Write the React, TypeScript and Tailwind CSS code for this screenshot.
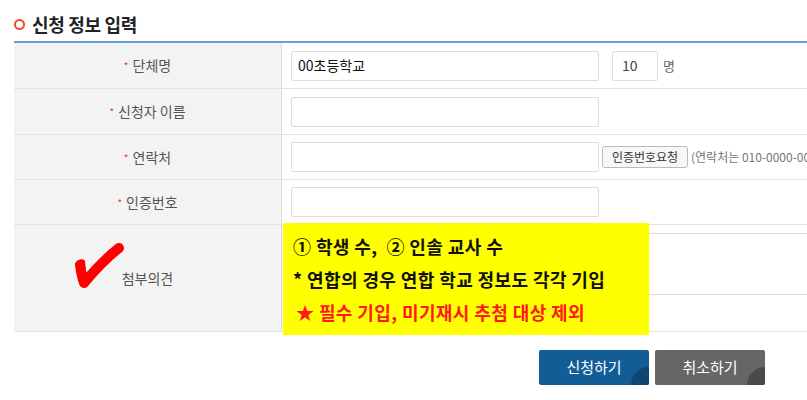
export default function App() {
  const labelCls =
    "w-[268px] shrink-0 bg-[#f3f3f3] border-r border-[#dddddd] flex items-center justify-center text-[14px] text-[#555555]";

  const Star = () => <span className="text-[#e0452a] text-[10px] mr-[4px]">*</span>;

  return (
    <div
      className="w-[807px] h-[400px] overflow-hidden bg-white"
      style={{ fontFamily: '"Noto Sans CJK KR", "Noto Sans", sans-serif' }}
    >
      {/* title */}
      <div className="flex items-center pl-[14px] pt-[7px] h-[41px]">
        <span className="w-[11px] h-[11px] rounded-full border-[2.5px] border-[#ec4e20] mr-[7px]" />
        <h2 className="text-[18px] font-bold text-[#222222] tracking-[-0.3px]">신청 정보 입력</h2>
      </div>

      <div className="ml-[14px] w-[820px] border-t-2 border-[#6d9be0]">
        {/* 단체명 */}
        <div className="flex h-[46px] border-b border-[#e2e2e2]">
          <div className={labelCls}>
            <Star />
            단체명
          </div>
          <div className="flex items-center pl-[9px]">
            <div className="shrink-0 w-[308px] h-[30px] border border-[#dddddd] rounded-[2px] flex items-center px-[6px] text-[14px] text-[#111111]">
              00초등학교
            </div>
            <div className="shrink-0 ml-[13px] w-[46px] h-[30px] border border-[#dddddd] rounded-[2px] flex items-center px-[9px] text-[14px] text-[#444444]">
              10
            </div>
            <span className="ml-[5px] text-[13px] text-[#666666]">명</span>
          </div>
        </div>

        {/* 신청자 이름 */}
        <div className="flex h-[46px] border-b border-[#e2e2e2]">
          <div className={labelCls}>
            <Star />
            신청자 이름
          </div>
          <div className="flex items-center pl-[9px]">
            <div className="shrink-0 w-[308px] h-[30px] border border-[#dddddd] rounded-[2px]" />
          </div>
        </div>

        {/* 연락처 */}
        <div className="flex h-[45px] border-b border-[#e2e2e2]">
          <div className={labelCls}>
            <Star />
            연락처
          </div>
          <div className="flex items-center pl-[9px] min-w-0">
            <div className="shrink-0 w-[308px] h-[30px] border border-[#dddddd] rounded-[2px]" />
            <button className="shrink-0 whitespace-nowrap ml-[3px] w-[86px] h-[22px] border border-[#bbbbbb] rounded-[3px] bg-[#f7f7f7] text-[12px] text-[#333333] leading-none">
              인증번호요청
            </button>
            <span className="shrink-0 ml-[3px] text-[12px] text-[#777777] whitespace-nowrap">
              (연락처는 010-0000-0000
            </span>
          </div>
        </div>

        {/* 인증번호 */}
        <div className="flex h-[45px] border-b border-[#e2e2e2]">
          <div className={labelCls}>
            <Star />
            인증번호
          </div>
          <div className="flex items-center pl-[9px]">
            <div className="shrink-0 w-[308px] h-[30px] border border-[#dddddd] rounded-[2px]" />
          </div>
        </div>

        {/* 첨부의견 */}
        <div className="relative flex h-[107px] border-b border-[#e2e2e2]">
          <div className={labelCls + " relative"}>
            <svg
              className="absolute left-[58px] top-[14px]"
              width="56"
              height="52"
              viewBox="0 0 56 52"
            >
              <path
                d="M8 26 C9 33 10 39 12 44 C22 32 34 19 47 9"
                fill="none"
                stroke="#ff0000"
                strokeWidth="10"
                strokeLinecap="round"
                strokeLinejoin="round"
              />
              <path d="M3 25 C5 20 11 19 13 22 L14 33 Z" fill="#ff0000" />
            </svg>
            <span>첨부의견</span>
          </div>
          <div className="flex-1 pl-[9px] pt-[8px]">
            <div className="w-full h-[62px] border border-[#dddddd] rounded-[2px]" />
          </div>

          {/* note overlay */}
          <div className="absolute left-[269px] -top-[2px] w-[366px] h-[112px] bg-[#ffff00] pl-[10px] pt-[7px] font-bold text-[18px] leading-[33px] tracking-[0.4px] whitespace-nowrap">
            <p className="text-[#111111]">① 학생 수,&nbsp; ② 인솔 교사 수</p>
            <p className="text-[#111111]">* 연합의 경우 연합 학교 정보도 각각 기입</p>
            <p className="text-[#ff1a1a] pl-[3px]">★ 필수 기입, 미기재시 추첨 대상 제외</p>
          </div>
        </div>
      </div>

      {/* buttons */}
      <div className="flex pl-[539px] pt-[18px] gap-[6px]">
        <button className="relative overflow-hidden w-[110px] h-[35px] rounded-[2px] bg-[#135d97] text-white text-[15px]">
          <span className="absolute -right-[18px] -bottom-[18px] w-[36px] h-[36px] rounded-full bg-[#0d4673]" />
          <span className="relative">신청하기</span>
        </button>
        <button className="relative overflow-hidden w-[110px] h-[35px] rounded-[2px] bg-[#666666] text-white text-[15px]">
          <span className="absolute -right-[18px] -bottom-[18px] w-[36px] h-[36px] rounded-full bg-[#4a4a4a]" />
          <span className="relative">취소하기</span>
        </button>
      </div>
    </div>
  );
}
